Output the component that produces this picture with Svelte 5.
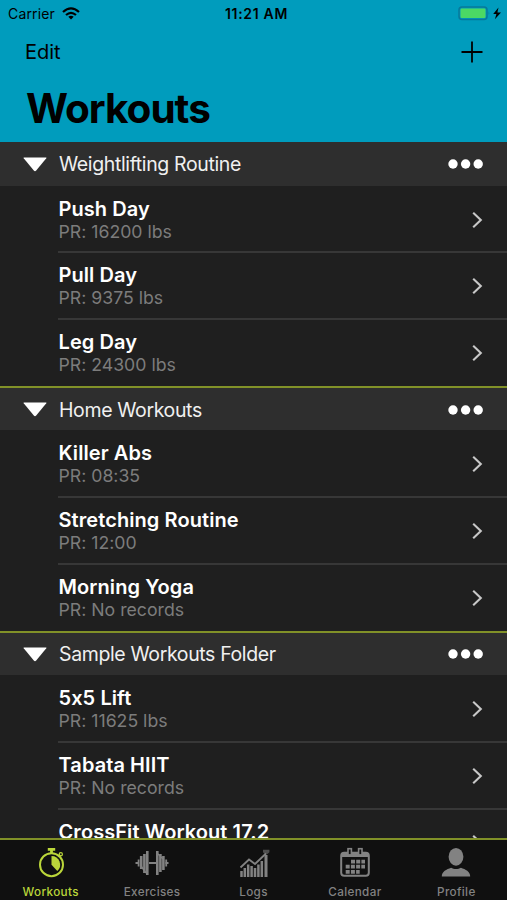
<script>
    const folders = [
        {
            name: 'Weightlifting Routine',
            workouts: [
                { name: 'Push Day', record: '16200 lbs' },
                { name: 'Pull Day', record: '9375 lbs' },
                { name: 'Leg Day', record: '24300 lbs' },
            ],
        },
        {
            name: 'Home Workouts',
            workouts: [
                { name: 'Killer Abs', record: '08:35' },
                { name: 'Stretching Routine', record: '12:00' },
                { name: 'Morning Yoga', record: 'No records' },
            ],
        },
        {
            name: 'Sample Workouts Folder',
            workouts: [
                { name: '5x5 Lift', record: '11625 lbs' },
                { name: 'Tabata HIIT', record: 'No records' },
                { name: 'CrossFit Workout 17.2', record: '' },
            ],
        },
    ];

    const tabs = ['Workouts', 'Exercises', 'Logs', 'Calendar', 'Profile'];

    let activeTab = $state('Workouts');
    let collapsed = $state({});

    function toggle(name) {
        collapsed[name] = !collapsed[name];
    }
</script>

<div class="screen">
    <header>
        <div class="status">
            <div class="carrier">
                <span>Carrier</span>
                <svg width="18" height="13" viewBox="0 0 18 13" fill="none" stroke="#000" stroke-width="2.2">
                    <path d="M1 5Q9-2.4 17 5" />
                    <path d="M4 8Q9 3.6 14 8" />
                    <path d="M9 12.4 6.3 9.8Q9 7.6 11.7 9.8Z" fill="#000" stroke="none" />
                </svg>
            </div>
            <span class="time">11:21 AM</span>
            <div class="battery">
                <svg width="44" height="15" viewBox="0 0 44 15">
                    <rect x="1" y="1" width="28" height="12.5" rx="3" fill="none" stroke="#07799a" stroke-width="1.5" />
                    <rect x="2.5" y="2.5" width="25" height="9.5" rx="1.2" fill="#4bd964" />
                    <path d="M30.6 5.3q1.5 1.9 0 3.8Z" fill="#07799a" />
                    <path d="M40.5 1.5 35.2 8h3.2l-1.5 5.2L43 6.5h-3.6Z" fill="#000" />
                </svg>
            </div>
        </div>
        <div class="nav">
            <button class="edit">Edit</button>
            <button class="add" aria-label="Add">
                <svg width="22" height="22" viewBox="0 0 22 22" stroke="#000" stroke-width="1.8">
                    <path d="M.5 11h21M11 .5v21" />
                </svg>
            </button>
        </div>
        <h1>Workouts</h1>
    </header>

    <main>
        {#each folders as folder (folder.name)}
            <section>
                <div class="folder">
                    <button class="toggle" class:closed={collapsed[folder.name]} onclick={() => toggle(folder.name)} aria-label="Toggle">
                        <svg width="24" height="15" viewBox="0 0 24 15">
                            <path d="M1 .5h22q.8 0 .3.8L13.2 13.6q-1.2 1.3-2.4 0L.7 1.3Q.2.5 1 .5Z" fill="#fff" />
                        </svg>
                    </button>
                    <h2>{folder.name}</h2>
                    <button aria-label="More">
                        <svg width="36" height="10" viewBox="0 0 36 10" fill="#fff">
                            <circle cx="5" cy="5" r="4.7" />
                            <circle cx="17.6" cy="5" r="4.7" />
                            <circle cx="30.2" cy="5" r="4.7" />
                        </svg>
                    </button>
                </div>
                {#if !collapsed[folder.name]}
                    <ul>
                        {#each folder.workouts as workout (workout.name)}
                            <li>
                                <div>
                                    <h3>{workout.name}</h3>
                                    <p>{#if workout.record}PR: {workout.record}{/if}</p>
                                </div>
                                <svg width="11" height="18" viewBox="0 0 11 18" fill="none" stroke="#c8c8c8" stroke-width="2.1">
                                    <path d="M1.2 1.8 8.8 9l-7.6 7.2" />
                                </svg>
                            </li>
                        {/each}
                    </ul>
                {/if}
            </section>
        {/each}
    </main>

    <nav class="tabs">
        {#each tabs as tab (tab)}
            <button class="tab" class:active={activeTab === tab} onclick={() => (activeTab = tab)}>
                <svg width="36" height="32" viewBox="0 0 36 32" fill="none" stroke="currentColor">
                    {#if tab === 'Workouts'}
                        <circle cx="18.5" cy="18.7" r="11.5" stroke-width="2" />
                        <path d="M18.5 10v8.7l5.8 6.4A8.7 8.7 0 0 0 18.5 10Z" fill="currentColor" stroke="none" />
                        <path d="M14.8 3.3h7.4M18.5 3v5" stroke-width="2.8" />
                        <path d="m25.3 10.8 2-2" stroke-width="1.8" />
                        <circle cx="27.8" cy="8.3" r="1.6" stroke-width="1.2" />
                    {:else if tab === 'Exercises'}
                        <path d="M1.5 17h3M15 17h7M31.5 17h3" stroke-width="2.2" />
                        <path d="M4.6 13.5v7M32.2 13.5v7" stroke-width="1.8" />
                        <path d="M7.2 10v13M10.4 8v19M29.4 10v14M26.4 8v18" stroke-width="2.6" />
                        <path d="M13.3 5v24M23.3 5v24" stroke-width="2.6" />
                        <path d="m7 20 5 7M24 8l5 5" stroke-width="1.4" />
                    {:else if tab === 'Logs'}
                        <path d="m4.5 21.5 8.5-8 6 4.5L30 7.5" stroke-width="1.8" />
                        <path d="M5.5 25v6M8.8 22v9M12.2 18.5v12.5M15.6 20v11M19 22v9M22.4 18.5v12.5M25.8 15v16" stroke-width="2.5" />
                        <path d="M30 9v22" stroke-width="3" />
                        <path d="M27 3.7h6.4v2.5L31.4 8h-2.6L27 6.2Z" fill="currentColor" stroke="none" opacity=".55" />
                    {:else if tab === 'Calendar'}
                        <rect x="4.2" y="6.7" width="27.6" height="23" rx="3" stroke-width="2" />
                        <path d="M4 7h28v4H4Z" fill="currentColor" stroke="none" />
                        <rect x="11" y="2.7" width="3.4" height="6.2" fill="#101010" stroke-width="1.6" />
                        <rect x="21.6" y="2.7" width="3.4" height="6.2" fill="#101010" stroke-width="1.6" />
                        <path d="M14 15.6h14M8.7 20.7h19.3M8.7 25.8h14" stroke-width="3.8" stroke-dasharray="4 1.2" />
                    {:else}
                        <ellipse cx="18" cy="10.8" rx="7.4" ry="8.9" fill="currentColor" stroke="none" />
                        <path d="M3.8 30.5c0-5 4.7-7.2 9.3-8.8 2.7 1.8 7.1 1.8 9.8 0 4.6 1.6 9.3 3.8 9.3 8.8Z" fill="currentColor" stroke="none" />
                    {/if}
                </svg>
                <span>{tab}</span>
            </button>
        {/each}
    </nav>
</div>

<style>
    :global(body) {
        margin: 0;
        background: #1f1f1f;
    }

    .screen {
        display: flex;
        flex-direction: column;
        height: 900px;
        overflow: hidden;
        font-family: Inter, "Liberation Sans", sans-serif;
        font-feature-settings: "calt" 0;
        color: #fff;
        background: #1f1f1f;
    }

    h1, h2, h3, p, ul {
        margin: 0;
        padding: 0;
        white-space: nowrap;
    }

    svg {
        display: block;
        flex: none;
    }

    button {
        padding: 0;
        border: 0;
        background: none;
        color: inherit;
        font: inherit;
        cursor: pointer;
    }

    header {
        flex: none;
        height: 142px;
        color: #000;
        background: #009cbd;
    }

    .status {
        display: grid;
        grid-template-columns: 1fr auto 1fr;
        align-items: center;
        height: 27px;
        padding: 0 5px 0 8px;
        font-size: 14px;
        letter-spacing: 0.15px;
    }

    .carrier {
        display: flex;
        align-items: center;
        gap: 7px;
    }

    .time {
        padding-left: 3px;
        font-weight: 600;
        letter-spacing: 0.7px;
    }

    .battery {
        justify-self: end;
    }

    .nav {
        display: flex;
        justify-content: space-between;
        align-items: center;
        height: 50px;
        padding: 0 24px 0 25px;
        font-size: 20px;
    }

    h1 {
        padding-left: 26px;
        font-size: 40.5px;
        font-weight: 700;
        line-height: 63px;
        letter-spacing: -1px;
    }

    main {
        flex: 1;
        min-height: 0;
        overflow: hidden;
    }

    section + section {
        border-top: 2px solid #819128;
    }

    .folder {
        display: flex;
        align-items: center;
        box-sizing: border-box;
        height: 42.7px;
        padding: 1px 23px 0;
        background: #2e2e2e;
    }

    section:first-child .folder {
        height: 43.7px;
    }

    .toggle {
        margin-right: 12px;
    }

    .toggle.closed {
        transform: rotate(-90deg);
    }

    h2 {
        flex: 1;
        font-size: 19.5px;
        font-weight: 400;
        letter-spacing: -0.37px;
        color: #f0f0f0;
    }

    ul {
        padding-left: 58px;
        list-style: none;
    }

    li {
        display: flex;
        justify-content: space-between;
        align-items: center;
        box-sizing: border-box;
        height: 66.7px;
        padding: 1.2px 24px 0 0;
    }

    /* drawn over the row edge, so every row keeps the same height */
    li:not(:last-child) {
        box-shadow: inset 0 -1px #373737, 0 1px #373737;
    }

    h3 {
        padding-left: 0.5px;
        font-size: 20px;
        font-weight: 600;
        line-height: 24px;
        letter-spacing: 0.08px;
    }

    p {
        min-height: 22px;
        padding-left: 0.5px;
        font-size: 17.7px;
        line-height: 22px;
        color: #7c7c7c;
    }

    .tabs {
        display: flex;
        flex: none;
        box-sizing: border-box;
        height: 62px;
        border-top: 2px solid #819128;
        background: #101010;
    }

    .tab {
        display: flex;
        flex: 1;
        flex-direction: column;
        align-items: center;
        padding-top: 6px;
        color: #828282;
    }

    .tab span {
        margin-top: 6.5px;
        font-size: 11.7px;
        font-weight: 500;
        line-height: 15px;
        letter-spacing: 0.35px;
    }

    .tab.active {
        color: #bbd63a;
    }
</style>
